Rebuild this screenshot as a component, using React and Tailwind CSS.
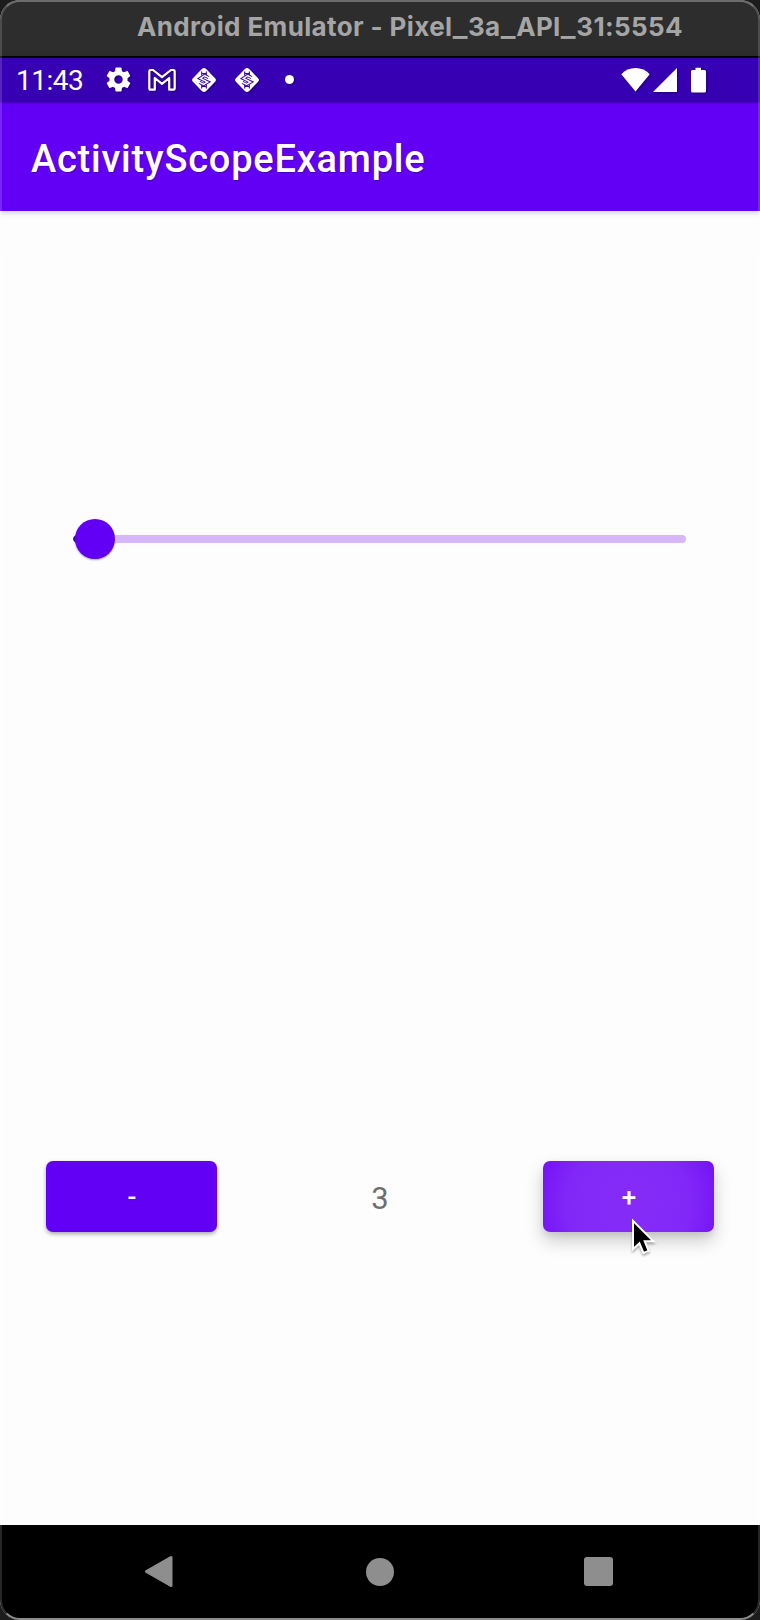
function Gear() {
  return (
    <svg className="size-[29px]" viewBox="0 0 24 24" fill="#fff">
      <path d="M19.43 12.98c.04-.32.07-.64.07-.98s-.03-.66-.07-.98l2.11-1.65c.19-.15.24-.42.12-.64l-2-3.46c-.12-.22-.39-.3-.61-.22l-2.49 1c-.52-.4-1.08-.73-1.69-.98l-.38-2.65C14.46 2.18 14.25 2 14 2h-4c-.25 0-.46.18-.49.42l-.38 2.65c-.61.25-1.17.59-1.69.98l-2.49-1c-.23-.09-.49 0-.61.22l-2 3.46c-.13.22-.07.49.12.64l2.11 1.65c-.04.32-.07.65-.07.98s.03.66.07.98l-2.11 1.65c-.19.15-.24.42-.12.64l2 3.46c.12.22.39.3.61.22l2.49-1c.52.4 1.08.73 1.69.98l.38 2.65c.03.24.24.42.49.42h4c.25 0 .46-.18.49-.42l.38-2.65c.61-.25 1.17-.59 1.69-.98l2.49 1c.23.09.49 0 .61-.22l2-3.46c.12-.22.07-.49-.12-.64l-2.11-1.65zM12 15.5c-1.93 0-3.5-1.57-3.5-3.5s1.57-3.5 3.5-3.5 3.5 1.57 3.5 3.5-1.57 3.5-3.5 3.5z" />
    </svg>
  );
}

function Mail() {
  return (
    <svg className="h-[22px] w-[28px]" viewBox="0 0 28 22" fill="none" stroke="#fff" strokeWidth="2.2" strokeLinejoin="round">
      <path d="M1.3 2.6Q1.3 1 3 1H5L14 8.2L23 1H25Q26.7 1 26.7 2.6V19.4Q26.7 20.7 25.4 20.7H21.2V9L14 14.8L6.8 9V20.7H2.6Q1.3 20.7 1.3 19.4Z" />
    </svg>
  );
}

function Diamond() {
  return (
    <svg className="size-[26px]" viewBox="0 0 26 26" fill="none">
      <rect x="3.8" y="3.8" width="18.4" height="18.4" rx="3" transform="rotate(45 13 13)" fill="#fff" />
      <path d="M10.7 4.6V8.5M15.3 4.6V8.5M10.7 17.5V21.4M15.3 17.5V21.4M10.7 6.5H15.3M10.7 19.5H15.3" stroke="#3700b3" strokeWidth="1.1" />
      <path d="M17.6 10.6L13.6 8.4L9.2 11.4L16.8 15L12.6 17.6L8.4 15.4" stroke="#3700b3" strokeWidth="3.3" />
      <path d="M18.2 10.9L13.6 8.5L9.4 11.4L16.6 15L12.6 17.5L7.8 15.1" stroke="#fff" strokeWidth="1.5" />
    </svg>
  );
}

function StatusBar() {
  return (
    <div className="flex h-[44px] shrink-0 items-center bg-[#3700b3] pl-[16px] shadow-[0_1px_2px_rgba(0,0,0,0.3)]">
      <span className="w-[88px] pt-[2px] text-[28px] leading-[44px] tracking-[-0.5px] whitespace-nowrap text-white">11:43</span>
      <div className="flex flex-1 items-center pb-[1px] drop-shadow-[1px_1px_1px_rgba(0,0,0,0.35)]">
        <Gear />
        <div className="ml-[15px] flex"><Mail /></div>
        <div className="ml-[15px] flex"><Diamond /></div>
        <div className="ml-[17px] flex"><Diamond /></div>
        <div className="ml-[25px] size-[9px] rounded-full bg-white" />
      </div>
      <svg className="mr-[52px] h-[28px] w-[88px] drop-shadow-[1px_1px_1px_rgba(0,0,0,0.35)]" viewBox="0 0 88 28" fill="#fff">
        <path d="M15.5 25.5L1.3 8.2Q7 2 15.5 2T29.7 8.2Z" />
        <path d="M33 26L57 2V26Z" />
        <path d="M75.5 1.8H81V4H84.5Q86 4 86 5.5V25Q86 26.5 84.5 26.5H72.5Q71 26.5 71 25V5.5Q71 4 72.5 4H75.5Z" />
      </svg>
    </div>
  );
}

function Underscore() {
  return <span className="mx-[1.4px] inline-block scale-x-[1.2]">_</span>;
}

function Slider() {
  return (
    <div className="mt-[308px] mr-[74px] ml-[73px] flex h-[40px] items-center">
      <svg className="h-[8px] w-[3px]" viewBox="0 0 3 8"><path d="M3 0Q0 1.5 0 4T3 8Z" fill="#3a0a96" /></svg>
      <div className="-ml-[1px] size-[40px] rounded-full bg-[#6200f5] shadow-[0_1px_2px_rgba(0,0,0,0.35)]" />
      <div className="h-[8px] flex-1 rounded-r-full bg-[#d7b7fb]" />
    </div>
  );
}

function NavBar() {
  return (
    <div className="flex h-[95px] shrink-0 items-center bg-black pb-[2px]">
      <svg className="ml-[144px] h-[33px] w-[30px]" viewBox="0 0 30 33">
        <path d="M2.5 16.5L27 2.5V30.5Z" fill="#8e8e8e" stroke="#8e8e8e" strokeWidth="3" strokeLinejoin="round" />
      </svg>
      <div className="ml-[192px] size-[28px] rounded-full bg-[#8e8e8e]" />
      <div className="ml-[190px] size-[29px] rounded-[3px] bg-[#8e8e8e]" />
    </div>
  );
}

export default function App() {
  return (
    <div className="h-[1620px] w-[760px] bg-[#1c1c1c] font-['Roboto',sans-serif]">
      <div className="relative flex h-full flex-col overflow-hidden rounded-[20px] bg-[#fdfdfd]">
        <div className="flex h-[58px] shrink-0 justify-center border-b-2 border-black bg-[#2d2d2d] pl-[60px]">
          <span className="font-['Inter',sans-serif] text-[26px] leading-[54px] font-bold tracking-[0.37px] whitespace-nowrap text-[#a5a5a5]">
            Android Emulator - Pixel<Underscore />3a<Underscore />API<Underscore />31:5554
          </span>
        </div>
        <div className="relative z-10 flex shrink-0 flex-col bg-[#6200f5] shadow-[0_1px_6px_rgba(0,0,0,0.22)]">
          <StatusBar />
          <h1 className="h-[109px] pl-[31px] text-[38px] leading-[115px] font-medium tracking-[0.78px] whitespace-nowrap text-white [text-shadow:1px_1px_1px_rgba(0,0,0,0.25)]">
            ActivityScopeExample
          </h1>
        </div>
        <main className="flex flex-1 flex-col">
          <Slider />
          <div className="mt-[602px] mr-[46px] ml-[46px] flex h-[71px] items-center justify-between">
            <button className="h-[71px] w-[171px] rounded-[7px] bg-[#6200f5] pt-[2px] pl-[1px] text-[26px] font-medium text-white shadow-[0_2px_4px_rgba(0,0,0,0.35)]">-</button>
            <span className="pt-[5px] text-[31px] text-[#6e6e6e]">3</span>
            <button className="relative h-[71px] w-[171px] rounded-[7px] bg-[radial-gradient(circle_at_50%_60%,#852bf8_30%,#8127f8_65%,#7412f6_100%)] pt-[2px] pl-[1px] text-[26px] font-medium text-white shadow-[0_9px_18px_rgba(0,0,0,0.2),0_3px_6px_rgba(0,0,0,0.08)]">
              +
              <svg className="absolute top-[57px] left-[88px] h-[40px] w-[26px] drop-shadow-[0_2px_1px_rgba(0,0,0,0.3)]" viewBox="0 0 26 40">
                <path d="M2 2.8V31.2L8.4 25.2L12.4 35L17.6 32.8L13.7 23.2H22.4Z" fill="#000" stroke="#fff" strokeWidth="2" />
              </svg>
            </button>
          </div>
        </main>
        <NavBar />
        <div className="pointer-events-none absolute inset-0 z-20 rounded-[20px] border-2 border-x-white/15 border-t-white/30 border-b-[#8c8c8c]" />
      </div>
    </div>
  );
}
